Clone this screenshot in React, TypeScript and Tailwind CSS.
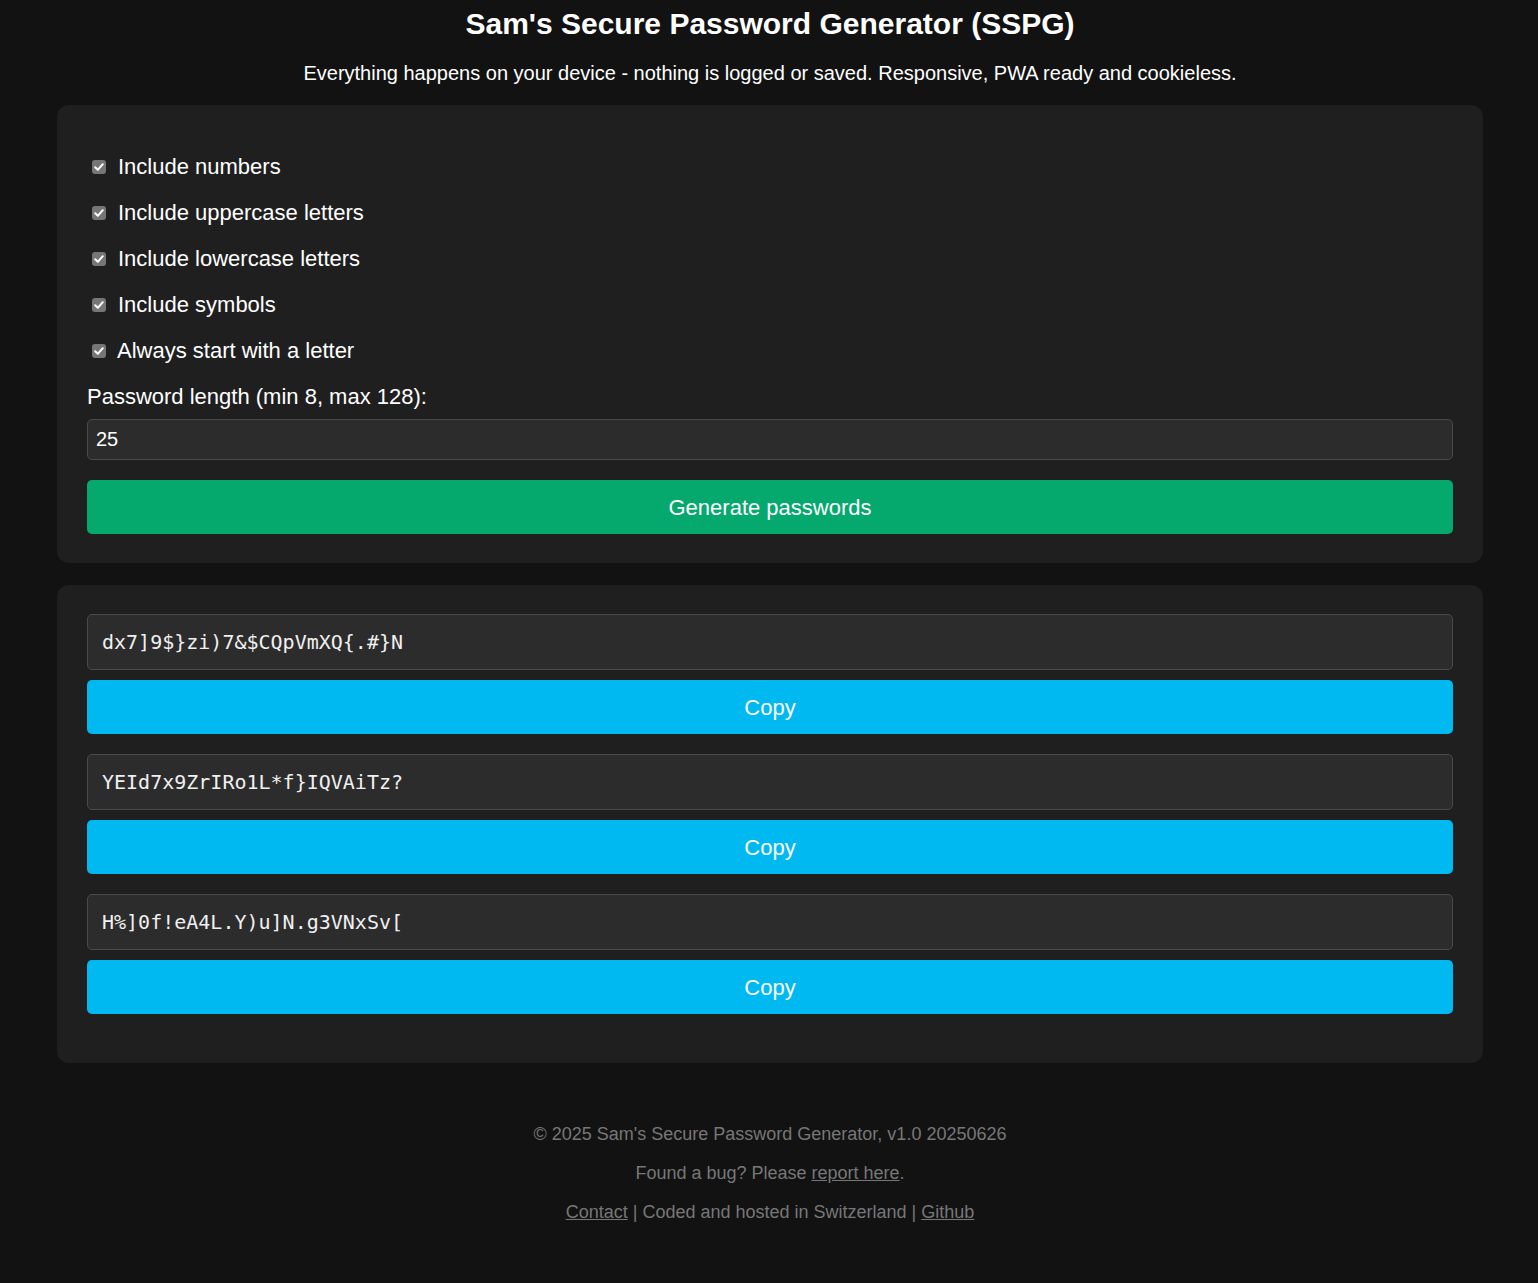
const options = [
  "Include numbers",
  "Include uppercase letters",
  "Include lowercase letters",
  "Include symbols",
  "Always start with a letter",
];

const passwords = [
  "dx7]9$}zi)7&$CQpVmXQ{.#}N",
  "YEId7x9ZrIRo1L*f}IQVAiTz?",
  "H%]0f!eA4L.Y)u]N.g3VNxSv[",
];

function Check() {
  return (
    <span className="flex h-[14px] w-[14px] shrink-0 items-center justify-center rounded-[3px] bg-[#767676]">
      <svg viewBox="0 0 14 14" className="h-[14px] w-[14px]">
        <path d="M3.2 7.2 L5.8 9.8 L10.8 4.2" fill="none" stroke="white" strokeWidth="2" strokeLinecap="round" strokeLinejoin="round" />
      </svg>
    </span>
  );
}

export default function App() {
  return (
    <div className="min-h-[1283px] bg-[#121212] pb-10 text-white font-['Liberation_Sans',Arial,sans-serif]">
      <h1 className="pt-[5px] pl-[2px] text-center text-[30px] font-bold leading-[38px]">
        Sam's Secure Password Generator (SSPG)
      </h1>
      <p className="mt-[18px] pl-[2px] text-center text-[20px] leading-[24px]">
        Everything happens on your device - nothing is logged or saved. Responsive, PWA ready and cookieless.
      </p>

      <div className="ml-[57px] mt-[20px] w-[1426px] rounded-[12px] bg-[#1f1f1f] px-[30px] pt-[30px] pb-[29px]">
        <div className="mt-[19px] flex flex-col gap-[20px]">
          {options.map((o, i) => (
            <label key={o} className="flex h-[26px] items-center pl-[5px] text-[22px] leading-[26px]">
              <Check />
              <span className={i === 4 ? "ml-[11px]" : "ml-[12px]"}>{o}</span>
            </label>
          ))}
        </div>
        <div className="mt-[20px] text-[22px] leading-[26px]">Password length (min 8, max 128):</div>
        <input
          readOnly
          value="25"
          className="mt-[9px] block h-[41px] w-full rounded-[5px] border border-[#4a4a4a] bg-[#2c2c2c] px-[8px] text-[20px] text-white outline-none"
        />
        <button className="mt-[20px] block h-[54px] w-full rounded-[5px] bg-[#05a86d] text-[22px] text-white">
          Generate passwords
        </button>
      </div>

      <div className="ml-[57px] mt-[22px] w-[1426px] rounded-[12px] bg-[#1f1f1f] px-[30px] pt-[29px] pb-[29px]">
        {passwords.map((p) => (
          <div key={p} className="mb-[20px]">
            <div className="flex h-[56px] items-center rounded-[5px] border border-[#4a4a4a] bg-[#2c2c2c] px-[14px] font-['DejaVu_Sans_Mono',monospace] text-[20px] text-[#f0f0f0]">
              {p}
            </div>
            <button className="mt-[10px] block h-[54px] w-full rounded-[5px] bg-[#00b9f1] text-[22px] text-white">
              Copy
            </button>
          </div>
        ))}
      </div>

      <footer className="mt-[60px] flex flex-col items-center gap-[17px] pl-[2px] text-[18px] leading-[22px] text-[#777]">
        <p>© 2025 Sam's Secure Password Generator, v1.0 20250626</p>
        <p>
          Found a bug? Please <a className="underline">report here</a>.
        </p>
        <p>
          <a className="underline">Contact</a> | Coded and hosted in Switzerland | <a className="underline">Github</a>
        </p>
      </footer>
    </div>
  );
}
